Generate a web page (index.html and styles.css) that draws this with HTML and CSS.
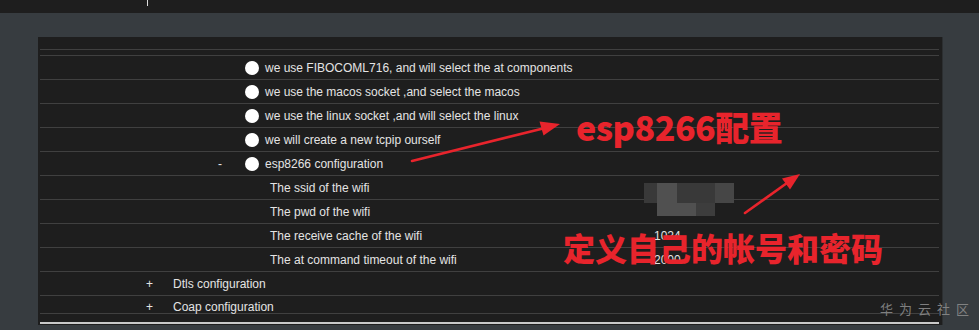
FILE: index.html
```html
<!DOCTYPE html>
<html lang="en">
<head>
  <meta charset="UTF-8" />
  <title>Component configuration</title>
  <link rel="stylesheet" href="styles.css">
</head>
<body>
  <header class="topbar"><span class="caret"></span></header>

  <main class="stage">
    <section class="panel">
      <div class="head"></div>
      <div class="band"></div>

      <ul class="tree">
        <li class="row opt"><span class="dot"></span>we use FIBOCOML716, and will select the at components</li>
        <li class="row opt"><span class="dot"></span>we use the macos socket ,and select the macos</li>
        <li class="row opt"><span class="dot"></span>we use the linux socket ,and will select the linux</li>
        <li class="row opt"><span class="dot"></span>we will create a new tcpip ourself</li>
        <li class="row esp"><span class="toggle">-</span><span class="dot"></span>esp8266 configuration</li>
        <li class="row sub"><span class="name">The ssid of the wifi</span><span class="value"></span></li>
        <li class="row sub"><span class="name">The pwd of the wifi</span><span class="value"></span></li>
        <li class="row sub"><span class="name">The receive cache of the wifi</span><span class="value">1024</span></li>
        <li class="row sub"><span class="name">The at command timeout of the wifi</span><span class="value">2000</span></li>
        <li class="row group"><span class="toggle">+</span>Dtls configuration</li>
        <li class="row group last"><span class="toggle">+</span>Coap configuration</li>
      </ul>

      <div class="scrollbar"></div>

      <!-- blurred ssid / pwd values -->
      <div class="mosaic">
        <i class="m1"></i><i class="m2"></i><i class="m1"></i><i class="m1"></i><i class="m3"></i>
        <i></i><i class="m2"></i><i class="m2"></i><i class="m4"></i><i></i>
      </div>
    </section>
  </main>

  <!-- annotations drawn over the screenshot -->
  <svg class="arrows" viewBox="0 0 979 330" width="979" height="330">
    <line x1="412" y1="161" x2="543" y2="128.5" />
    <polygon points="560,124 539.5,121.5 543.5,135.5" />
    <line x1="745" y1="213" x2="787" y2="183" />
    <polygon points="800,174 782,178.5 790,189.5" />
  </svg>
  <p class="note note-esp">esp8266配置</p>
  <p class="note note-account">定义自己的帐号和密码</p>

  <div class="watermark">华为云社区</div>
</body>
</html>
```

FILE: styles.css
```css
/* Dark IDE theme */
body {
  margin: 0;
  width: 979px;
  height: 330px;
  overflow: hidden;
  position: relative;
  background-color: #373c40;
  color: #e4e4e4;
  font-family: "Liberation Sans", Arial, sans-serif;
  font-size: 12px;
}

.topbar {
  height: 13px;
  background: #1e1e1e;
  display: flex;
}

.caret {
  margin-left: 147px;
  width: 1px;
  height: 6px;
  background: #ddd;
}

.stage {
  padding: 24px 0 0 38px;
}

/* Config panel */
.panel {
  position: relative;
  width: 905px;
  box-sizing: border-box;
  padding: 0 3px 1px 2px;
  background: #1e1e1e;
  border-right: 1px solid #2c2f31;
}

.head {
  height: 12px;
  border-bottom: 1px solid #404040;
}

.band {
  height: 5px;
  border-bottom: 1px solid #404040;
}

.tree {
  list-style: none;
  margin: 0;
  padding: 0;
}

.row {
  display: flex;
  align-items: center;
  height: 24px;
  box-sizing: border-box;
  border-bottom: 1px solid #404040;
  white-space: nowrap;
}

.row.last {
  height: 18px;
  align-items: flex-start;
  padding-top: 4px;
}

.opt {
  padding-left: 205px;
}

.esp {
  padding-left: 178px;
}

.sub {
  padding-left: 230px;
}

.group {
  padding-left: 106px;
}

.esp .toggle {
  width: 27px;
}

.group .toggle {
  width: 27px;
}

.dot {
  width: 14px;
  height: 14px;
  margin-right: 6px;
  border-radius: 50%;
  background: #fff;
  flex: none;
}

.sub .name {
  width: 384px;
}

.scrollbar {
  margin-top: 8px;
  height: 2px;
  background: #c9c9c9;
}

/* Pixelated secret values */
.mosaic {
  position: absolute;
  left: 606px;
  top: 146px;
  display: grid;
  grid-template-columns: 13px 20px 19px 19px 19px;
  grid-template-rows: 20px 13px;
}

.mosaic .m1 { background: #393939; }
.mosaic .m2 { background: #505050; }
.mosaic .m3 { background: #464646; }
.mosaic .m4 { background: #3d3d3d; }

/* Red annotations */
.arrows {
  position: absolute;
  top: 0;
  left: 0;
  pointer-events: none;
}

.arrows line {
  stroke: #e8242c;
  stroke-width: 2.6;
  stroke-linecap: round;
}

.arrows polygon {
  fill: #e8242c;
}

.note {
  position: absolute;
  margin: 0;
  line-height: 1;
  color: #e8242c;
  font-family: "Noto Sans CJK SC", sans-serif;
  font-weight: 900;
  white-space: nowrap;
}

.note-esp {
  left: 576px;
  top: 110px;
  font-size: 34px;
  letter-spacing: -0.5px;
}

.note-account {
  left: 563px;
  top: 231px;
  font-size: 32px;
}

.watermark {
  position: absolute;
  left: 880px;
  top: 299px;
  color: #8a8a8a;
  font-family: "Noto Sans CJK SC", sans-serif;
  font-size: 13px;
  letter-spacing: 6px;
  opacity: 0.9;
}
```
